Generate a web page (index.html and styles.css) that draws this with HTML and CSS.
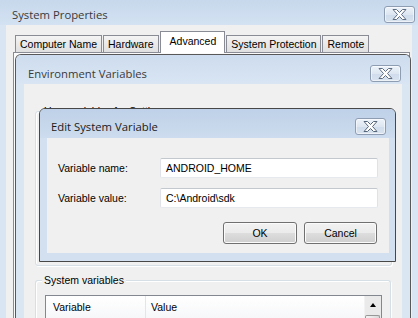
FILE: index.html
```html
<!DOCTYPE html>
<html>
<head>
<meta charset="utf-8">
<title>System Properties</title>
<link rel="stylesheet" href="styles.css">
</head>
<body>
<div class="win sys">
  <div class="titlebar sys-tb">
    <span class="title inactive">System Properties</span>
    <span class="close"><svg width="15" height="11" viewBox="0 0 15 11"><polygon points="1,0.5 4.5,0.5 7.5,3.5 10.5,0.5 14,0.5 9.5,5.5 14,10.5 10.5,10.5 7.5,7.5 4.5,10.5 1,10.5 5.5,5.5" fill="#fff" stroke="#5d6d82" stroke-width="1" stroke-linejoin="round"/></svg></span>
  </div>
  <div class="client sys-client">
    <div class="tabs">
      <div class="tab">Computer Name</div>
      <div class="tab">Hardware</div>
      <div class="tab sel">Advanced</div>
      <div class="tab">System Protection</div>
      <div class="tab">Remote</div>
    </div>
    <div class="tabpanel"></div>
  </div>
</div>

<div class="win env">
  <div class="titlebar env-tb">
    <span class="title inactive">Environment Variables</span>
    <span class="close"><svg width="15" height="11" viewBox="0 0 15 11"><polygon points="1,0.5 4.5,0.5 7.5,3.5 10.5,0.5 14,0.5 9.5,5.5 14,10.5 10.5,10.5 7.5,7.5 4.5,10.5 1,10.5 5.5,5.5" fill="#fff" stroke="#5d6d82" stroke-width="1" stroke-linejoin="round"/></svg></span>
  </div>
  <div class="client env-client">
    <div class="group user-group">
      <div class="group-label">User variables for Settings</div>
    </div>
    <div class="group sys-group">
      <div class="group-label">System variables</div>
      <div class="listview">
        <div class="lv-main">
          <div class="lv-head">
            <div class="lv-col c1">Variable</div>
            <div class="lv-col c2">Value</div>
          </div>
        </div>
        <div class="scrollbar">
          <div class="sb-up"><span class="arrow"></span></div>
          <div class="sb-thumb"></div>
        </div>
      </div>
    </div>
  </div>
</div>

<div class="win edit">
  <div class="titlebar edit-tb">
    <span class="title">Edit System Variable</span>
    <span class="close"><svg width="15" height="11" viewBox="0 0 15 11"><polygon points="1,0.5 4.5,0.5 7.5,3.5 10.5,0.5 14,0.5 9.5,5.5 14,10.5 10.5,10.5 7.5,7.5 4.5,10.5 1,10.5 5.5,5.5" fill="#fff" stroke="#55657a" stroke-width="1" stroke-linejoin="round"/></svg></span>
  </div>
  <div class="client edit-client">
    <div class="row">
      <label class="lbl">Variable name:</label>
      <div class="input">ANDROID_HOME</div>
    </div>
    <div class="row">
      <label class="lbl">Variable value:</label>
      <div class="input">C:\Android\sdk</div>
    </div>
    <div class="buttons">
      <div class="btn ok">OK</div>
      <div class="btn cancel">Cancel</div>
    </div>
  </div>
</div>
</body>
</html>
```

FILE: styles.css
```css
* { box-sizing: border-box; }
html, body { margin: 0; padding: 0; }
body {
  width: 418px;
  height: 318px;
  overflow: hidden;
  position: relative;
  background: #d9e5f3;
  font-family: "Liberation Sans", Arial, sans-serif;
  font-size: 10.5px;
  color: #000;
}

.win { display: flex; flex-direction: column; }
.titlebar {
  display: flex;
  justify-content: space-between;
  align-items: flex-start;
  flex: none;
}
.title {
  font-family: "Open Sans", "Noto Sans", sans-serif;
  font-size: 11.3px;
  line-height: 17px;
  white-space: nowrap;
  color: #1a1a1a;
}
.title.inactive { color: #3a3a3a; }
.close {
  width: 31px;
  height: 17px;
  border: 1px solid #8e9db2;
  border-radius: 3px;
  background: linear-gradient(#eef3f9, #dde6f1 50%, #cfdcec 51%, #d9e3ef);
  box-shadow: inset 0 0 0 1px rgba(255,255,255,0.55);
  display: flex;
  align-items: center;
  justify-content: center;
}
.close svg { display: block; }
.client { background: #f0f0f0; flex: 1; min-height: 0; }

/* System Properties (background window) */
.sys { height: 318px; }
.sys-tb {
  height: 25px;
  padding: 6px 3px 0 12px;
  background: linear-gradient(#c7d8ec, #d4e2f2);
}
.sys-client { margin: 0 6px; display: flex; flex-direction: column; }
.tabs {
  display: flex;
  align-items: flex-end;
  height: 27px;
  flex: none;
  padding-left: 9px;
  gap: 1px;
}
.tab {
  height: 17px;
  padding: 0 4px;
  border: 1px solid #898c95;
  border-bottom: none;
  background: linear-gradient(#f4f4f4, #e9e9e9 50%, #e0e0e0);
  display: flex;
  align-items: center;
  white-space: nowrap;
  line-height: 13px;
}
.tab.sel {
  height: 22px;
  padding: 0 8px 2px 9px;
  margin-bottom: -1px;
  background: #fff;
  position: relative;
  z-index: 1;
}
.tabpanel {
  flex: 1;
  margin: 0 2px 0 7px;
  border: 1px solid #898c95;
  border-bottom: none;
  background: #fbfbfb;
}

/* Environment Variables window */
.env {
  position: absolute;
  left: 15px;
  top: 54px;
  width: 396px;
  height: 264px;
  border: 1px solid #585858;
  border-bottom: none;
  border-radius: 6px 6px 0 0;
  background: #dbe6f3;
}
.env-tb {
  height: 29px;
  padding: 10px 9px 0 12px;
  border-radius: 5px 5px 0 0;
  background: linear-gradient(#cddcee, #d9e5f3);
}
.env-client {
  margin: 0 8px;
  display: flex;
  flex-direction: column;
  overflow: hidden;
}
.group {
  flex: none;
  border: 1px solid #d5dfe5;
  border-radius: 3px;
  box-shadow: inset 1px 1px 0 #fff, 1px 1px 0 #fff;
}
.group-label {
  width: max-content;
  margin: -7px 0 0 6px;
  padding: 0 2px;
  line-height: 13px;
  background: #f0f0f0;
  color: #000;
}
.user-group { margin: 27px 10px 0 11px; height: 155px; }
.sys-group {
  flex: 1;
  margin: 14px 11px 0 11px;
  border-bottom: none;
  border-radius: 3px 3px 0 0;
  display: flex;
  flex-direction: column;
}

.listview {
  flex: 1;
  display: flex;
  margin: 8px 8px 0 9px;
  border: 1px solid #828790;
  border-bottom: none;
  background: #fff;
}
.lv-main { flex: 1; }
.lv-head {
  display: flex;
  height: 24px;
  background: linear-gradient(#fff, #f6f7f9);
  border-bottom: 1px solid #e1e5ea;
}
.lv-col { display: flex; align-items: center; line-height: 13px; }
.lv-col.c1 { width: 100px; padding-left: 7px; border-right: 1px solid #e3e5e8; }
.lv-col.c2 { padding-left: 5px; }
.scrollbar {
  width: 17px;
  background: #eaeaea;
  display: flex;
  flex-direction: column;
  border-left: 1px solid #f2f2f2;
}
.sb-up {
  height: 17px;
  flex: none;
  display: flex;
  align-items: center;
  justify-content: center;
}
.arrow {
  width: 0;
  height: 0;
  border-left: 3.5px solid transparent;
  border-right: 3.5px solid transparent;
  border-bottom: 4px solid #000;
  margin-top: 1px;
}
.sb-thumb {
  flex: 1;
  margin: 2px 1px 0 0;
  border: 1px solid #979797;
  border-bottom: none;
  border-radius: 2px 2px 0 0;
  background: linear-gradient(90deg, #f3f3f3, #e8e8e8 50%, #d8d8d8);
}

/* Edit System Variable dialog (active) */
.edit {
  position: absolute;
  left: 39px;
  top: 108px;
  width: 357px;
  height: 154px;
  border: 1px solid #474747;
  border-radius: 6px 6px 0 0;
  background: #d3e0f0;
}
.edit-tb {
  height: 29px;
  padding: 9px 9px 0 11px;
  border-radius: 5px 5px 0 0;
  background: linear-gradient(#bfd1e8, #cddcee);
}
.edit-client {
  margin: 0 6px 8px 7px;
  padding: 20px 11px 0 11px;
}
.row { display: flex; align-items: center; height: 20px; }
.row + .row { margin-top: 10px; }
.lbl { width: 102px; flex: none; line-height: 13px; }
.input {
  flex: 1;
  height: 20px;
  padding-left: 5px;
  display: flex;
  align-items: center;
  background: #fff;
  border: 1px solid;
  border-color: #c3c7ce #dfe2e8 #e6e9ee #dfe2e8;
  border-radius: 2px;
  line-height: 13px;
}
.buttons {
  display: flex;
  justify-content: flex-end;
  gap: 7px;
  margin-top: 14px;
  padding-right: 1px;
}
.btn {
  height: 22px;
  border: 1px solid #707070;
  border-radius: 3px;
  background: linear-gradient(#f2f2f2, #ebebeb 50%, #dddddd 51%, #cfcfcf);
  box-shadow: inset 0 0 0 1px #fbfbfb;
  display: flex;
  align-items: center;
  justify-content: center;
  line-height: 13px;
}
.btn.ok { width: 74px; }
.btn.cancel { width: 73px; }
```
